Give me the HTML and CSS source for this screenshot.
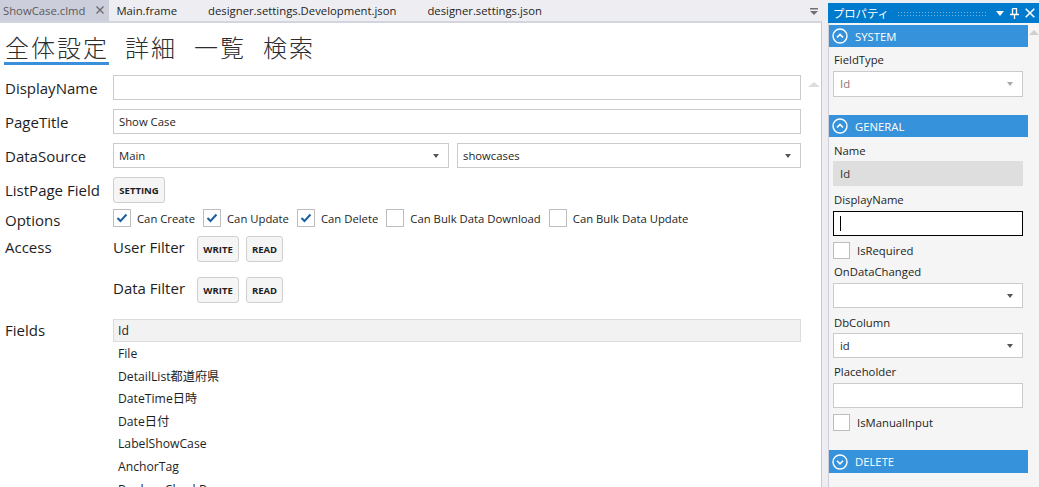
FILE: index.html
```html
<!DOCTYPE html>
<html lang="ja">
<head>
<meta charset="utf-8">
<title>ShowCase.clmd</title>
<link rel="stylesheet" href="styles.css">
</head>
<body>
<div class="app">
  <div class="doc">
    <div class="tabstrip">
      <div class="tab active"><span>ShowCase.clmd</span>
        <svg class="tab-close" width="8" height="8" viewBox="0 0 8 8"><path d="M0.5 0.5L7.5 7.5M7.5 0.5L0.5 7.5" stroke="#6d6d6d" stroke-width="1.4"/></svg>
      </div>
      <div class="tab">Main.frame</div>
      <div class="tab">designer.settings.Development.json</div>
      <div class="tab">designer.settings.json</div>
      <div class="tab-spacer"></div>
      <svg class="tab-menu" width="8" height="7" viewBox="0 0 8 7"><rect x="0" y="0" width="8" height="1.5" fill="#717171"/><path d="M0 3H8L4 7Z" fill="#717171"/></svg>
    </div>
    <div class="doc-body">
      <div class="page-tabs">
        <div class="ptab active">全体設定</div>
        <div class="ptab">詳細</div>
        <div class="ptab">一覧</div>
        <div class="ptab">検索</div>
      </div>
      <div class="form-wrap">
        <div class="form">
          <div class="row">
            <div class="lbl">DisplayName</div>
            <div class="ctl"><div class="input"></div></div>
          </div>
          <div class="row">
            <div class="lbl">PageTitle</div>
            <div class="ctl"><div class="input">Show Case</div></div>
          </div>
          <div class="row">
            <div class="lbl">DataSource</div>
            <div class="ctl split">
              <div class="input select first">Main<span class="caret"></span></div>
              <div class="input select grow">showcases<span class="caret"></span></div>
            </div>
          </div>
          <div class="row row-tight">
            <div class="lbl">ListPage Field</div>
            <div class="ctl"><button class="btn btn-setting">SETTING</button></div>
          </div>
          <div class="row row-options">
            <div class="lbl lbl-low">Options</div>
            <div class="ctl options">
              <label class="opt"><span class="cb checked"><svg width="16" height="16" viewBox="0 0 16 16"><path d="M3.5 8L6.5 11L12.5 4.5" fill="none" stroke="#1c5e9e" stroke-width="2"/></svg></span>Can Create</label>
              <label class="opt"><span class="cb checked"><svg width="16" height="16" viewBox="0 0 16 16"><path d="M3.5 8L6.5 11L12.5 4.5" fill="none" stroke="#1c5e9e" stroke-width="2"/></svg></span>Can Update</label>
              <label class="opt"><span class="cb checked"><svg width="16" height="16" viewBox="0 0 16 16"><path d="M3.5 8L6.5 11L12.5 4.5" fill="none" stroke="#1c5e9e" stroke-width="2"/></svg></span>Can Delete</label>
              <label class="opt"><span class="cb"></span>Can Bulk Data Download</label>
              <label class="opt"><span class="cb"></span>Can Bulk Data Update</label>
            </div>
          </div>
          <div class="row row-top row-access">
            <div class="lbl lbl-line">Access</div>
            <div class="ctl access">
              <div class="subrow">
                <div class="sublbl">User Filter</div>
                <button class="btn btn-write">WRITE</button>
                <button class="btn btn-read">READ</button>
              </div>
              <div class="subrow">
                <div class="sublbl">Data Filter</div>
                <button class="btn btn-write">WRITE</button>
                <button class="btn btn-read">READ</button>
              </div>
            </div>
          </div>
          <div class="row row-top">
            <div class="lbl lbl-fields">Fields</div>
            <div class="ctl">
              <div class="list">
                <div class="item selected">Id</div>
                <div class="item">File</div>
                <div class="item">DetailList都道府県</div>
                <div class="item">DateTime日時</div>
                <div class="item">Date日付</div>
                <div class="item">LabelShowCase</div>
                <div class="item">AnchorTag</div>
                <div class="item">BooleanCheckBox</div>
              </div>
            </div>
          </div>
        </div>
        <div class="vscroll"><span class="arrow-up"></span></div>
      </div>
    </div>
  </div>

  <div class="panel">
    <div class="panel-title">
      <span class="ptitle">プロパティ</span>
      <span class="grip"></span>
      <svg class="ticon" width="8" height="5" viewBox="0 0 8 5"><path d="M0 0H8L4 5Z" fill="#fff"/></svg>
      <svg class="ticon" width="9" height="11" viewBox="0 0 9 11"><path d="M2.5 0.5H6.5V6.5M2.5 0.5V6.5M0 6.5H9M4.5 6.5V11" fill="none" stroke="#fff" stroke-width="1.3"/></svg>
      <svg class="ticon" width="10" height="10" viewBox="0 0 10 10"><path d="M0.7 0.7L9.3 9.3M9.3 0.7L0.7 9.3" stroke="#fff" stroke-width="1.6"/></svg>
    </div>
    <div class="panel-body">
      <div class="pcontent">
        <div class="section">
          <svg width="16" height="16" viewBox="0 0 16 16"><circle cx="8" cy="8" r="7" fill="none" stroke="#fff" stroke-width="1.4"/><path d="M5 9.5L8 6.5L11 9.5" fill="none" stroke="#fff" stroke-width="1.6"/></svg>
          <span>SYSTEM</span>
        </div>
        <div class="plabel">FieldType</div>
        <div class="pfield pselect disabled">Id<span class="caret light"></span></div>

        <div class="section sec-gap">
          <svg width="16" height="16" viewBox="0 0 16 16"><circle cx="8" cy="8" r="7" fill="none" stroke="#fff" stroke-width="1.4"/><path d="M5 9.5L8 6.5L11 9.5" fill="none" stroke="#fff" stroke-width="1.6"/></svg>
          <span>GENERAL</span>
        </div>
        <div class="plabel">Name</div>
        <div class="pfield readonly tight">Id</div>
        <div class="plabel">DisplayName</div>
        <div class="pfield focused"><span class="textcaret"></span></div>
        <label class="pcheck"><span class="cb small"></span>IsRequired</label>
        <div class="plabel lab-after-cb">OnDataChanged</div>
        <div class="pfield pselect"><span class="caret"></span></div>
        <div class="plabel lab-wide">DbColumn</div>
        <div class="pfield pselect tight">id<span class="caret"></span></div>
        <div class="plabel">Placeholder</div>
        <div class="pfield"></div>
        <label class="pcheck"><span class="cb small"></span>IsManualInput</label>

        <div class="section sec-delete">
          <svg width="16" height="16" viewBox="0 0 16 16"><circle cx="8" cy="8" r="7" fill="none" stroke="#fff" stroke-width="1.4"/><path d="M5 6.8L8 9.8L11 6.8" fill="none" stroke="#fff" stroke-width="1.6"/></svg>
          <span>DELETE</span>
        </div>
      </div>
      <div class="pscroll"><span class="arrow-up"></span></div>
    </div>
  </div>
</div>
</body>
</html>
```

FILE: styles.css
```css
* { box-sizing: border-box; }
html, body { margin: 0; padding: 0; }
body {
  width: 1039px;
  height: 487px;
  overflow: hidden;
  background: #eeeef2;
  font-family: "Open Sans", "Noto Sans CJK JP", sans-serif;
  color: #1e1e1e;
}
.app { display: flex; height: 487px; }

/* ---------- document ---------- */
.doc { width: 822px; display: flex; flex-direction: column; }
.tabstrip {
  height: 23px;
  display: flex;
  align-items: stretch;
  border-bottom: 2px solid #d3d5de;
  font-size: 11.3px;
}
.tab {
  display: flex;
  align-items: center;
  padding: 0 24px 1px 7px;
  white-space: nowrap;
  color: #1e1e1e;
}
.tab.active {
  background: #cccedb;
  color: #5a5a5a;
  padding: 0 5px 1px 3px;
}
.tab-close { margin-left: 11px; }
.tab-spacer { flex: 1; }
.tab-menu { align-self: flex-start; margin: 8px 4px 0 0; }

.doc-body {
  flex: 1;
  min-height: 0;
  background: #fff;
  border-right: 1px solid #c9c9c9;
  display: flex;
  flex-direction: column;
}
.page-tabs {
  display: flex;
  gap: 15px;
  padding: 9px 0 0 4px;
  font-family: "Noto Sans CJK JP", sans-serif;
  font-weight: 300;
  font-size: 24px;
  color: #2d2d2d;
}
.ptab {
  line-height: 30px;
  padding: 0 1px;
  letter-spacing: 2px;
  border-bottom: 3px solid transparent;
}
.ptab.active { border-bottom-color: #3a8fdb; padding-right: 0; }

.form-wrap { flex: 1; min-height: 0; display: flex; overflow: hidden; }
.form { flex: 1; padding: 10px 5px 0 5px; }
.vscroll { width: 15px; padding-top: 17px; display: flex; justify-content: center; align-items: flex-start; }
.arrow-up {
  width: 0; height: 0;
  border-left: 6px solid transparent;
  border-right: 6px solid transparent;
  border-bottom: 5px solid #dcdcdc;
}

.row { display: flex; align-items: center; margin-bottom: 9px; }
.row-tight { margin-bottom: 6px; }
.row-top { align-items: flex-start; }
.row-options { height: 18px; align-items: flex-start; }
.row-access { margin-bottom: 16px; }
.lbl { width: 108px; flex: none; font-size: 15px; line-height: 20px; color: #1e1e1e; white-space: nowrap; }
.lbl-low { margin-top: 1px; }
.lbl-line { line-height: 22px; }
.lbl-fields { line-height: 23px; }
.ctl { flex: 1; min-width: 0; }
.split { display: flex; gap: 8px; }
.input {
  height: 25px;
  border: 1px solid #cbcbcb;
  background: #fff;
  font-size: 11.3px;
  line-height: 23px;
  padding-left: 5px;
  position: relative;
}
.select.first { width: 336px; }
.select.grow { flex: 1; }
.caret {
  position: absolute;
  right: 9px;
  top: 10px;
  width: 0; height: 0;
  border-left: 3.5px solid transparent;
  border-right: 3.5px solid transparent;
  border-top: 4px solid #555;
}
.caret.light { border-top-color: #a8a8a8; }

.btn {
  display: block;
  height: 26px;
  padding: 0;
  border: 1px solid #cfcfcf;
  border-radius: 3px;
  background: #f5f5f5;
  font-family: "Open Sans", sans-serif;
  font-weight: 700;
  font-size: 9.5px;
  color: #1e1e1e;
}
.btn-setting { width: 52px; }
.btn-write { width: 42px; }
.btn-read { width: 37px; margin-left: 7px; }

.options { display: flex; align-items: center; height: 18px; }
.opt { display: flex; align-items: center; font-size: 11.3px; margin-right: 8px; white-space: nowrap; }
.cb {
  width: 18px; height: 18px;
  border: 1px solid #bdbdbd;
  background: #fff;
  margin-right: 6px;
  display: flex;
  align-items: center;
  justify-content: center;
  flex: none;
}
.cb.small { width: 17px; height: 17px; margin-right: 7px; }

.access { display: flex; flex-direction: column; gap: 15px; }
.subrow { display: flex; align-items: flex-start; }
.sublbl { width: 84px; font-size: 15px; line-height: 22px; white-space: nowrap; }

.list { font-size: 12.2px; }
.item { height: 22.6px; line-height: 22.6px; padding-left: 5px; white-space: nowrap; }
.item.selected { height: 23px; line-height: 21px; background: #f2f2f2; border: 1px solid #dcdcdc; padding-left: 4px; margin-bottom: 1px; }

/* ---------- properties panel ---------- */
.panel { margin-left: 6px; width: 211px; padding-top: 3px; display: flex; flex-direction: column; }
.panel-title {
  height: 20px;
  background: #007acc;
  color: #fff;
  display: flex;
  align-items: center;
  padding: 0 4px 0 5px;
  font-size: 11.3px;
}
.ptitle { white-space: nowrap; }
.grip {
  flex: 1;
  height: 5px;
  margin: 1px 8px 0 8px;
  background-image: radial-gradient(circle, rgba(255,255,255,0.45) 0.6px, transparent 0.9px);
  background-size: 3px 3px;
}
.ticon { margin-left: 6px; }
.ticon:first-of-type { margin-left: 0; }

.panel-body { flex: 1; min-height: 0; display: flex; background: #f5f5f5; border-left: 1px solid #cccedb; }
.pcontent { width: 199px; padding-top: 2px; }
.pscroll { flex: 1; padding-top: 7px; display: flex; justify-content: center; align-items: flex-start; }
.pscroll .arrow-up { border-bottom-color: #cfcfcf; border-left-width: 5px; border-right-width: 5px; }

.section {
  height: 22px;
  background: #3592db;
  color: #fff;
  display: flex;
  align-items: center;
  gap: 7px;
  padding-left: 3px;
  font-size: 11.3px;
}
.sec-gap { margin-top: 18px; }
.sec-delete { margin-top: 19px; height: 23px; }

.plabel { font-size: 11.3px; line-height: 16px; padding-left: 5px; margin-top: 5px; color: #1e1e1e; }
.section + .plabel { margin-top: 5px; }
.sec-gap + .plabel { margin-top: 6px; }
.lab-after-cb { margin-top: 5px; }
.lab-wide { margin-top: 7px; }
.pfield + .plabel { margin-top: 6px; }
.pfield + .plabel.lab-wide { margin-top: 7px; }

.pfield {
  margin: 3px 5px 0 4px;
  height: 25px;
  border: 1px solid #cbcbcb;
  background: #fff;
  font-size: 11.3px;
  line-height: 23px;
  padding-left: 6px;
  position: relative;
}
.pfield.tight { margin-top: 2px; }
.pselect.disabled { height: 26px; color: #8a7575; line-height: 24px; }
.pfield.readonly { background: #dedede; border-color: #dedede; color: #333; }
.pfield.focused { border-color: #000; }
.textcaret { position: absolute; left: 6px; top: 4px; width: 1px; height: 15px; background: #000; }
.pcheck { display: flex; align-items: center; margin: 6px 0 0 4px; font-size: 11.3px; height: 17px; }
```
